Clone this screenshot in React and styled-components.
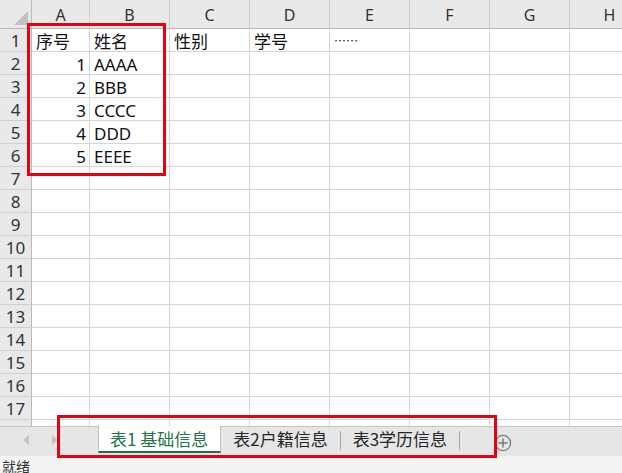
import React from "react";
import styled, { createGlobalStyle } from "styled-components";

const Global = createGlobalStyle`
  html, body { margin: 0; padding: 0; background: #fff; }
  body { font-family: "Noto Sans", "Noto Sans CJK SC", sans-serif; }
  * { box-sizing: border-box; }
`;

const Page = styled.div`
  position: relative;
  width: 622px;
  height: 473px;
  overflow: hidden;
  display: flex;
  flex-direction: column;
  background: #fff;
`;

const GridArea = styled.div`
  flex: 1;
  overflow: hidden;
  min-height: 0;
`;

const Grid = styled.div`
  display: grid;
  grid-template-columns: 32px 58px repeat(7, 80px);
  grid-template-rows: 29px repeat(18, 23px);
  width: 650px;
  font-family: "Noto Sans", "Noto Sans CJK SC", sans-serif;
  font-size: 17px;
  color: #111;
`;

const Corner = styled.div`
  background: #e9e9e9;
  border-right: 1px solid #b9b9b9;
  border-bottom: 1px solid #b9b9b9;
  display: flex;
  align-items: flex-end;
  justify-content: flex-end;
  padding: 0 3px 3px 0;
`;

const ColHead = styled.div`
  background: #e9e9e9;
  border-right: 1px solid #cfcfcf;
  border-bottom: 1px solid #b9b9b9;
  display: flex;
  align-items: flex-end;
  justify-content: center;
  padding-bottom: 1px;
  line-height: 24px;
  color: #333;
  font-size: 16px;
`;

const RowHead = styled.div`
  background: #e9e9e9;
  border-right: 1px solid #b9b9b9;
  border-bottom: 1px solid #cfcfcf;
  display: flex;
  align-items: center;
  justify-content: center;
  line-height: 22px;
  color: #333;
  font-size: 17px;
  padding-top: 1px;
`;

const Cell = styled.div`
  border-right: 1px solid #d6d6d6;
  border-bottom: 1px solid #d6d6d6;
  line-height: 22px;
  padding: 2px ${(p) => (p.$num ? "3px" : "0")} 0 ${(p) => (p.$num ? "0" : "4px")};
  text-align: ${(p) => (p.$num ? "right" : "left")};
  white-space: nowrap;
  overflow: visible;
`;

const Dots = styled.span`
  font-family: "Noto Sans CJK SC", sans-serif;
  font-size: 12px;
  position: relative;
  top: -2px;
`;

const TabBar = styled.div`
  height: 30px;
  flex: none;
  background: #e6e6e6;
  border-top: 1px solid #c6c6c6;
  display: flex;
  align-items: flex-start;
`;

const Nav = styled.div`
  width: 98px;
  height: 26px;
  display: flex;
  align-items: center;
  padding-left: 22px;
  gap: 21px;
`;

const Tab = styled.div`
  padding: ${(p) => (p.$active ? "0 12px 0 11px" : "0 12px 0 12px")};
  display: flex;
  align-items: center;
  font-family: "Noto Sans CJK SC", sans-serif;
  font-size: 17px;
  line-height: 20px;
  white-space: nowrap;
  color: ${(p) => (p.$active ? "#217346" : "#262626")};
  background: ${(p) => (p.$active ? "#fff" : "transparent")};
  border-left: ${(p) => (p.$active ? "1px solid #c0c0c0" : "none")};
  border-right: ${(p) => (p.$active ? "1px solid #c0c0c0" : "none")};
  border-bottom: 2px solid ${(p) => (p.$active ? "#217346" : "transparent")};
  margin-top: -1px;
  height: 27px;
`;

const Sep = styled.div`
  width: 1px;
  height: 19px;
  background: #a6a6a6;
  margin-top: 4px;
`;

const AddBtn = styled.div`
  margin-left: 34px;
  margin-top: 7px;
  width: 18px;
  height: 18px;
  display: flex;
`;

const StatusBar = styled.div`
  height: 17px;
  flex: none;
  background: #f3f3f3;
  font-family: "Noto Sans CJK SC", sans-serif;
  font-size: 14px;
  line-height: 16px;
  color: #333;
  padding: 2px 0 0 2px;
  overflow: hidden;
`;

const Highlight = styled.div`
  position: absolute;
  border: 3px solid #e60012;
  pointer-events: none;
`;

const cols = ["A", "B", "C", "D", "E", "F", "G", "H"];
const data = {
  1: { A: "序号", B: "姓名", C: "性别", D: "学号", E: "……" },
  2: { A: 1, B: "AAAA" },
  3: { A: 2, B: "BBB" },
  4: { A: 3, B: "CCCC" },
  5: { A: 4, B: "DDD" },
  6: { A: 5, B: "EEEE" },
};

export default function App() {
  const rows = Array.from({ length: 18 }, (_, i) => i + 1);
  return (
    <Page>
      <Global />
      <GridArea>
        <Grid>
          <Corner>
            <svg width="14" height="14" viewBox="0 0 14 14">
              <polygon points="0,14 14,14 14,0" fill="#c2c2c2" />
            </svg>
          </Corner>
          {cols.map((c) => (
            <ColHead key={c}>{c}</ColHead>
          ))}
          {rows.map((r) => (
            <React.Fragment key={r}>
              <RowHead>{r}</RowHead>
              {cols.map((c) => {
                const v = data[r] && data[r][c];
                const isNum = typeof v === "number";
                return (
                  <Cell key={c} $num={isNum}>
                    {v === "……" ? <Dots>{v}</Dots> : v !== undefined ? v : ""}
                  </Cell>
                );
              })}
            </React.Fragment>
          ))}
        </Grid>
      </GridArea>
      <TabBar>
        <Nav>
          <svg width="8" height="12" viewBox="0 0 8 12">
            <polygon points="7,1 1,6 7,11" fill="#c4c4c4" />
          </svg>
          <svg width="8" height="12" viewBox="0 0 8 12">
            <polygon points="1,1 7,6 1,11" fill="#c4c4c4" />
          </svg>
        </Nav>
        <Tab $active>表1 基础信息</Tab>
        <Tab>表2户籍信息</Tab>
        <Sep />
        <Tab>表3学历信息</Tab>
        <Sep />
        <AddBtn>
          <svg width="18" height="18" viewBox="0 0 18 18">
            <circle cx="9" cy="9" r="7.6" fill="none" stroke="#7a7a7a" strokeWidth="1.3" />
            <line x1="9" y1="4.5" x2="9" y2="13.5" stroke="#7a7a7a" strokeWidth="1.5" />
            <line x1="4.5" y1="9" x2="13.5" y2="9" stroke="#7a7a7a" strokeWidth="1.5" />
          </svg>
        </AddBtn>
      </TabBar>
      <StatusBar>就绪</StatusBar>
      <Highlight style={{ left: 27, top: 23, width: 139, height: 153 }} />
      <Highlight style={{ left: 57, top: 415, width: 440, height: 43 }} />
    </Page>
  );
}
